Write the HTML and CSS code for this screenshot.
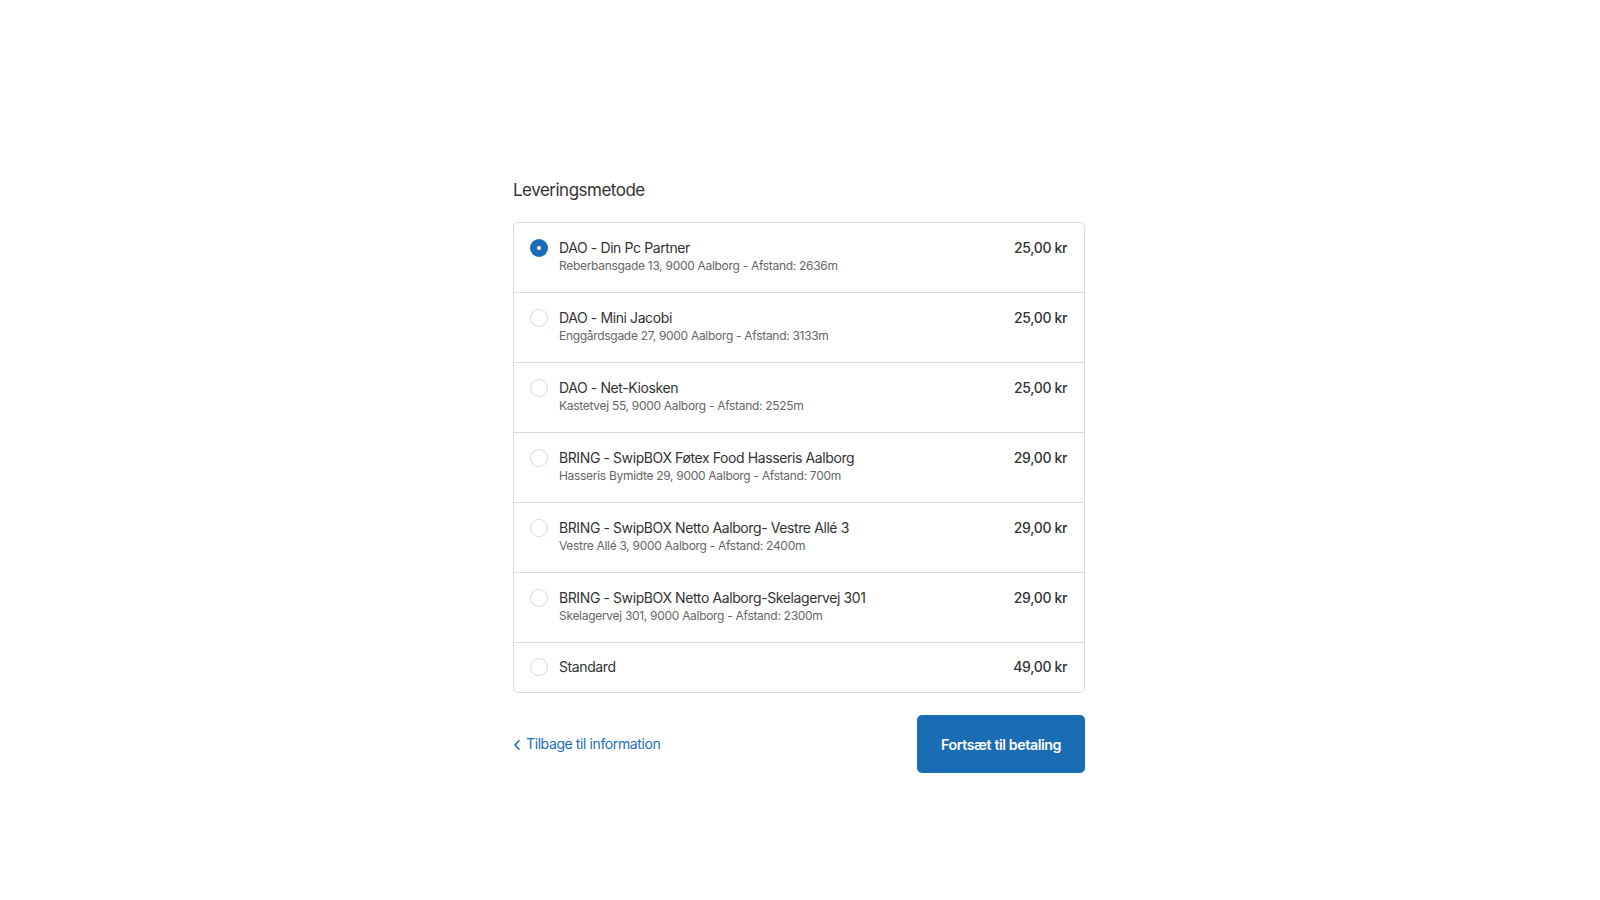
FILE: index.html
```html
<!DOCTYPE html>
<html lang="da">
<head>
<meta charset="utf-8">
<title>Leveringsmetode</title>
<link rel="stylesheet" href="styles.css">
</head>
<body>
<main class="page">
  <section class="step">
    <h2 class="step-title">Leveringsmetode</h2>
    <div class="methods">
      <label class="method">
        <span class="radio radio-checked"></span>
        <span class="method-info">
          <span class="method-name">DAO - Din Pc Partner</span>
          <span class="method-addr">Reberbansgade 13, 9000 Aalborg - Afstand: 2636m</span>
        </span>
        <span class="method-price">25,00 kr</span>
      </label>
      <label class="method">
        <span class="radio"></span>
        <span class="method-info">
          <span class="method-name">DAO - Mini Jacobi</span>
          <span class="method-addr">Enggårdsgade 27, 9000 Aalborg - Afstand: 3133m</span>
        </span>
        <span class="method-price">25,00 kr</span>
      </label>
      <label class="method">
        <span class="radio"></span>
        <span class="method-info">
          <span class="method-name">DAO - Net-Kiosken</span>
          <span class="method-addr">Kastetvej 55, 9000 Aalborg - Afstand: 2525m</span>
        </span>
        <span class="method-price">25,00 kr</span>
      </label>
      <label class="method">
        <span class="radio"></span>
        <span class="method-info">
          <span class="method-name">BRING - SwipBOX Føtex Food Hasseris Aalborg</span>
          <span class="method-addr">Hasseris Bymidte 29, 9000 Aalborg - Afstand: 700m</span>
        </span>
        <span class="method-price">29,00 kr</span>
      </label>
      <label class="method">
        <span class="radio"></span>
        <span class="method-info">
          <span class="method-name">BRING - SwipBOX Netto Aalborg- Vestre Allé 3</span>
          <span class="method-addr">Vestre Allé 3, 9000 Aalborg - Afstand: 2400m</span>
        </span>
        <span class="method-price">29,00 kr</span>
      </label>
      <label class="method">
        <span class="radio"></span>
        <span class="method-info">
          <span class="method-name">BRING - SwipBOX Netto Aalborg-Skelagervej 301</span>
          <span class="method-addr">Skelagervej 301, 9000 Aalborg - Afstand: 2300m</span>
        </span>
        <span class="method-price">29,00 kr</span>
      </label>
      <label class="method method-single">
        <span class="radio"></span>
        <span class="method-info">
          <span class="method-name">Standard</span>
        </span>
        <span class="method-price">49,00 kr</span>
      </label>
    </div>
    <div class="step-footer">
      <a class="back-link" href="#">
        <svg class="chev" width="8" height="12" viewBox="0 0 8 12"><path d="M6 1.8 2 6 6 10.2" fill="none" stroke="currentColor" stroke-width="1.6" stroke-linecap="round" stroke-linejoin="round"/></svg>
        <span>Tilbage til information</span>
      </a>
      <button class="btn" type="button">Fortsæt til betaling</button>
    </div>
  </section>
</main>
</body>
</html>
```

FILE: styles.css
```css
* { box-sizing: border-box; }
html, body { margin: 0; padding: 0; background: #fff; }
body {
  font-family: Inter, "Helvetica Neue", "Liberation Sans", Arial, sans-serif;
  color: #333333;
  -webkit-font-smoothing: antialiased;
}
.page {
  padding: 178px 0 0 513px;
}
.step { width: 572px; }
.step-title {
  margin: 0 0 20px 0;
  font-size: 17px;
  line-height: 24px;
  font-weight: 400;
  color: #333;
  letter-spacing: -0.5px;
}
.methods {
  border: 1px solid #d9d9d9;
  border-radius: 5px;
  overflow: hidden;
}
.method {
  display: flex;
  align-items: flex-start;
  padding: 16px 17px 17px 16px;
  border-top: 1px solid #d9d9d9;
  cursor: pointer;
}
.method:first-child { border-top: none; }
.method-single { padding-top: 15px; padding-bottom: 16px; }
.radio {
  flex: none;
  width: 18px;
  height: 18px;
  border-radius: 50%;
  border: 1px solid #d9d9d9;
  margin-right: 11px;
  background: #fff;
  display: flex;
  align-items: center;
  justify-content: center;
}
.radio-checked {
  border: none;
  background: #1a6db3;
}
.radio-checked::after {
  content: "";
  width: 4px;
  height: 4px;
  border-radius: 50%;
  background: #fff;
}
.method-info {
  flex: 1;
  display: flex;
  flex-direction: column;
}
.method-name {
  font-size: 14px;
  line-height: 17px;
  color: #333;
  letter-spacing: -0.4px;
}
.method-single .method-name,
.method-single .method-price { line-height: 18px; }
.method-addr {
  margin-top: 1px;
  font-size: 12px;
  line-height: 18px;
  color: #666;
  letter-spacing: -0.3px;
}
.method-price {
  flex: none;
  font-size: 14px;
  line-height: 17px;
  font-weight: 500;
  color: #333;
  letter-spacing: -0.35px;
}
.step-footer {
  margin-top: 22px;
  display: flex;
  align-items: center;
  justify-content: space-between;
}
.back-link {
  display: flex;
  align-items: center;
  gap: 5px;
  color: #1a6db3;
  text-decoration: none;
  font-size: 14px;
  line-height: 18px;
  letter-spacing: -0.4px;
}
.chev { margin-top: 2px; }
.btn {
  width: 168px;
  height: 58px;
  border: none;
  border-radius: 5px;
  background: #1a6db3;
  color: #fff;
  font-family: inherit;
  font-size: 14.2px;
  font-weight: 600;
  letter-spacing: -0.4px;
  cursor: pointer;
}
```
